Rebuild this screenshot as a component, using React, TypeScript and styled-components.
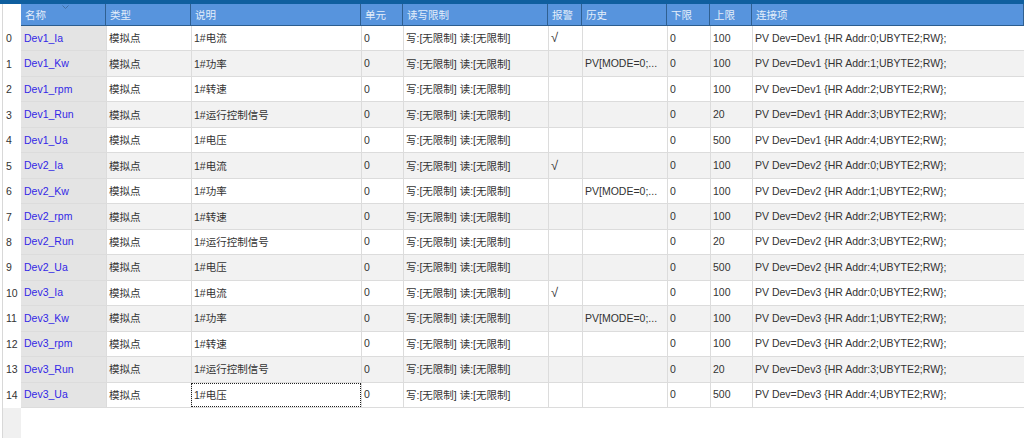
import React from 'react';
import styled, { createGlobalStyle } from 'styled-components';

const GlobalStyle = createGlobalStyle`
  html, body {
    margin: 0;
    padding: 0;
    background: #fff;
  }
  * {
    box-sizing: border-box;
  }
`;

const COLUMNS = '85px 85px 170px 42px 145px 34px 85px 43px 42px 1fr';

const Window = styled.div`
  width: 1024px;
  height: 438px;
  overflow: hidden;
  display: flex;
  flex-direction: column;
  background: #fff;
  color: #333;
  font-family: 'Liberation Sans', 'Noto Sans CJK SC', sans-serif;
  font-size: 10.5px;
`;

const TopBar = styled.div`
  height: 4px;
  flex: none;
  background: #0f5f9f;
`;

const Body = styled.div`
  flex: 1;
  display: grid;
  grid-template-columns: 21px 1fr;
  min-height: 0;
`;

const Gutter = styled.div`
  display: flex;
  flex-direction: column;
  margin-left: 2px;
  border-left: 1px solid #d8d8d8;
  background: #f0f0f0;
`;

const GutterHead = styled.div`
  height: 22px;
  background: #fff;
`;

const RowNumber = styled.div`
  height: 25.47px;
  display: flex;
  align-items: center;
  padding: 0 0 1px 3px;
  background: #fff;
`;

const Table = styled.div`
  display: flex;
  flex-direction: column;
`;

const HeaderRow = styled.div`
  position: relative;
  height: 22px;
  display: grid;
  grid-template-columns: ${COLUMNS};
  background: #5794dd;
  border-bottom: 1px solid #2b5d8f;
`;

const HeaderCell = styled.div`
  display: flex;
  align-items: center;
  padding-left: 4px;
  color: #e3eefa;
  border-right: 1px solid #2f6091;
  &:last-child {
    border-right: none;
  }
`;

const SortArrow = styled.svg`
  position: absolute;
  left: 41px;
  top: 1px;
  width: 7px;
  height: 4px;
`;

const Row = styled.div<{ $alt: boolean }>`
  height: 25.47px;
  display: grid;
  grid-template-columns: ${COLUMNS};
  background: ${(p) => (p.$alt ? '#f2f2f2' : '#fff')};
  border-bottom: 1px solid #dcdcdc;
`;

const Cell = styled.div`
  display: flex;
  align-items: center;
  padding: 0 0 1px 2px;
  white-space: nowrap;
  overflow: hidden;
  border-left: 1px solid #dcdcdc;
`;

const NameCell = styled(Cell)`
  padding-left: 3px;
  border-left: none;
  background: #e4e4e4;
  color: #3328e6;
`;

const FocusCell = styled(Cell)`
  background: #fff;
  outline: 1px dotted #222;
  outline-offset: -1px;
`;

const AlarmMark = styled.span`
  font-family: 'Liberation Sans', sans-serif;
  font-size: 13px;
  line-height: 1;
`;

const headers = ['名称', '类型', '说明', '单元', '读写限制', '报警', '历史', '下限', '上限', '连接项'];

const points = [
  { suffix: 'Ia', desc: '1#电流', high: 100, alarm: true, history: false },
  { suffix: 'Kw', desc: '1#功率', high: 100, alarm: false, history: true },
  { suffix: 'rpm', desc: '1#转速', high: 100, alarm: false, history: false },
  { suffix: 'Run', desc: '1#运行控制信号', high: 20, alarm: false, history: false },
  { suffix: 'Ua', desc: '1#电压', high: 500, alarm: false, history: false },
];

const rows = ['Dev1', 'Dev2', 'Dev3'].flatMap((dev) =>
  points.map((point, addr) => ({ ...point, dev, addr })),
);

const App: React.FC = () => {
  return (
    <Window>
      <GlobalStyle />
      <TopBar />
      <Body>
        <Gutter>
          <GutterHead />
          {rows.map((_, i) => (
            <RowNumber key={i}>{i}</RowNumber>
          ))}
        </Gutter>
        <Table>
          <HeaderRow>
            {headers.map((h) => (
              <HeaderCell key={h}>{h}</HeaderCell>
            ))}
            <SortArrow viewBox="0 0 7 4">
              <path d="M0.5 0.5 L3.5 3.5 L6.5 0.5" fill="none" stroke="#3f6fa5" strokeWidth="1" />
            </SortArrow>
          </HeaderRow>
          {rows.map((r, i) => {
            const DescCell = i === rows.length - 1 ? FocusCell : Cell;
            return (
              <Row key={i} $alt={i % 2 === 1}>
                <NameCell>{`${r.dev}_${r.suffix}`}</NameCell>
                <Cell>模拟点</Cell>
                <DescCell>{r.desc}</DescCell>
                <Cell>0</Cell>
                <Cell>写:[无限制] 读:[无限制]</Cell>
                <Cell>{r.alarm && <AlarmMark>√</AlarmMark>}</Cell>
                <Cell>{r.history ? 'PV[MODE=0;...' : ''}</Cell>
                <Cell>0</Cell>
                <Cell>{r.high}</Cell>
                <Cell>{`PV Dev=${r.dev} {HR Addr:${r.addr};UBYTE2;RW};`}</Cell>
              </Row>
            );
          })}
        </Table>
      </Body>
    </Window>
  );
};

export default App;
